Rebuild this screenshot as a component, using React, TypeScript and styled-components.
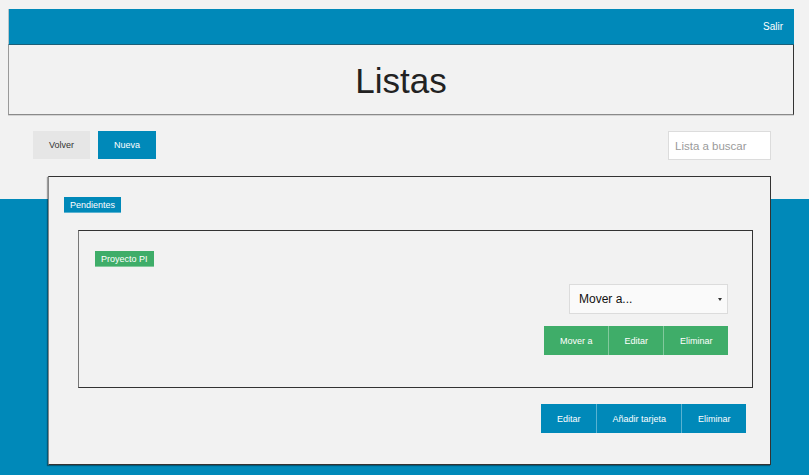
import React from "react";
import styled, { createGlobalStyle } from "styled-components";

const BLUE = "#0089b9";
const GREEN = "#3fad69";

const GlobalStyle = createGlobalStyle`
  html, body { margin: 0; padding: 0; }
  body {
    background: #f2f2f2;
    font-family: "Liberation Sans", Arial, sans-serif;
  }
  * { box-sizing: border-box; }
`;

const Page = styled.div`
  min-height: 475px;
  display: flex;
  flex-direction: column;
`;

const Top = styled.div`
  padding: 9px 15px 0 8px;
`;

const TopBar = styled.header`
  height: 36px;
  background: ${BLUE};
  border-left: 1px solid #b9c4c8;
  border-bottom: 1px solid #1b5f78;
  display: flex;
  align-items: center;
  justify-content: flex-end;
  padding-right: 11px;
`;

const Logout = styled.a`
  color: #fff;
  font-size: 10px;
  cursor: pointer;
`;

const TitleBox = styled.div`
  height: 70px;
  border: 1px solid #333;
  border-top: none;
  border-left-color: #9a9a9a;
  border-bottom-color: #8a8a8a;
  box-shadow: 0 1px 0 rgba(0, 0, 0, 0.12);
  display: flex;
  align-items: center;
  justify-content: center;
`;

const Title = styled.h1`
  margin: 0;
  font-weight: 400;
  font-size: 35px;
  color: #222;
  padding-top: 2px;
`;

const Toolbar = styled.div`
  display: flex;
  align-items: flex-start;
  padding: 16px 38px 0 33px;
`;

const ToolButton = styled.button<{ $primary?: boolean }>`
  height: 28px;
  padding: 0 16px;
  border: none;
  font-family: inherit;
  font-size: 9px;
  margin-right: 8px;
  background: ${(p) => (p.$primary ? BLUE : "#e6e6e6")};
  color: ${(p) => (p.$primary ? "#fff" : "#333")};
  cursor: pointer;
`;

const Search = styled.input`
  margin-left: auto;
  width: 103px;
  height: 29px;
  border: 1px solid #dcdcdc;
  background: #fff;
  padding: 0 6px;
  font-family: inherit;
  font-size: 11.5px;
  color: #333;
  outline: none;
  &::placeholder { color: #9a9a9a; }
`;

const Board = styled.section`
  flex: 1;
  padding: 16px 38px 10px 48px;
  background: linear-gradient(to bottom, #f2f2f2 0, #f2f2f2 39px, ${BLUE} 39px);
`;

const ListCard = styled.div`
  background: #f2f2f2;
  border: 1px solid #333;
  border-left-color: #888;
  box-shadow: -1px 1px 1px rgba(0, 0, 0, 0.35);
  padding: 20px 0 31px 0;
  display: flex;
  flex-direction: column;
`;

const Badge = styled.span<{ $color: string; $ml: number }>`
  align-self: flex-start;
  margin-left: ${(p) => p.$ml}px;
  height: 16px;
  line-height: 16px;
  padding: 0 6px;
  font-size: 9px;
  color: #fff;
  background: ${(p) => p.$color};
  border-bottom: 1px solid rgba(255, 255, 255, 0.35);
`;

const TaskCard = styled.div`
  margin: 17px 17px 0 29px;
  border: 1px solid #333;
  border-left-color: #777;
  padding: 20px 24px 32px 16px;
  display: flex;
  flex-direction: column;
`;

const SelectWrap = styled.div`
  align-self: flex-end;
  margin-top: 17px;
  width: 159px;
  height: 30px;
  background: #fafafa;
  border: 1px solid #dcdcdc;
  display: flex;
  align-items: center;
  padding: 0 5px 0 9px;
`;

const Select = styled.select`
  flex: 1;
  appearance: none;
  border: none;
  background: transparent;
  font-family: inherit;
  font-size: 12px;
  color: #111;
  padding: 0;
  outline: none;
`;

const Caret = styled.span`
  width: 0;
  height: 0;
  border-left: 2.5px solid transparent;
  border-right: 2.5px solid transparent;
  border-top: 3px solid #333;
`;

const ButtonGroup = styled.div<{ $mt: number }>`
  align-self: flex-end;
  margin-top: ${(p) => p.$mt}px;
  display: flex;
`;

const GroupButton = styled.button<{ $color: string }>`
  height: 29px;
  padding: 0 15.5px;
  border: none;
  font-family: inherit;
  font-size: 9px;
  color: #fff;
  background: ${(p) => p.$color};
  cursor: pointer;
  & + & { border-left: 1px solid rgba(255, 255, 255, 0.35); }
`;

const BoardActions = styled(ButtonGroup)`
  margin-right: 24px;
`;

export default function App() {
  return (
    <>
      <GlobalStyle />
      <Page>
        <Top>
          <TopBar>
            <Logout>Salir</Logout>
          </TopBar>
          <TitleBox>
            <Title>Listas</Title>
          </TitleBox>
        </Top>
        <Toolbar>
          <ToolButton>Volver</ToolButton>
          <ToolButton $primary>Nueva</ToolButton>
          <Search placeholder="Lista a buscar" />
        </Toolbar>
        <Board>
          <ListCard>
            <Badge $color={BLUE} $ml={15}>Pendientes</Badge>
            <TaskCard>
              <Badge $color={GREEN} $ml={0}>Proyecto PI</Badge>
              <SelectWrap>
                <Select defaultValue="">
                  <option value="">Mover a...</option>
                </Select>
                <Caret />
              </SelectWrap>
              <ButtonGroup $mt={12}>
                <GroupButton $color={GREEN}>Mover a</GroupButton>
                <GroupButton $color={GREEN}>Editar</GroupButton>
                <GroupButton $color={GREEN}>Eliminar</GroupButton>
              </ButtonGroup>
            </TaskCard>
            <BoardActions $mt={16}>
              <GroupButton $color={BLUE}>Editar</GroupButton>
              <GroupButton $color={BLUE}>Añadir tarjeta</GroupButton>
              <GroupButton $color={BLUE}>Eliminar</GroupButton>
            </BoardActions>
          </ListCard>
        </Board>
      </Page>
    </>
  );
}
